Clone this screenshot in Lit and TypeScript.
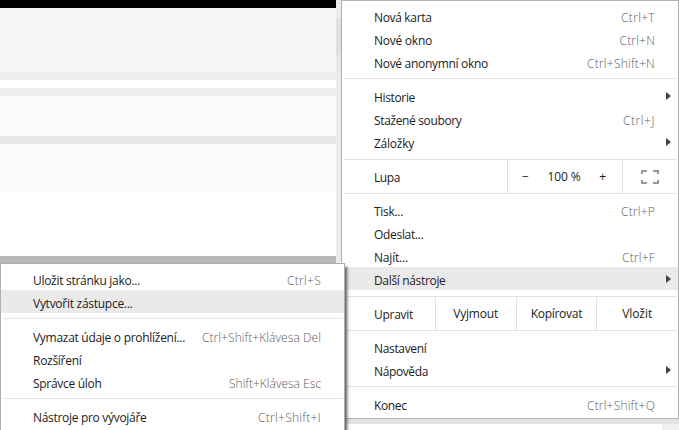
import { LitElement, html, css, svg, nothing } from "lit";
import { customElement, property } from "lit/decorators.js";

interface Item {
  label: string;
  width: number;
  keys?: string;
  keysWidth?: number;
  submenu?: boolean;
  active?: boolean;
}

/** Text run whose tracking is adjusted so that it fills a given advance width. */
@customElement("fit-text")
class FitText extends LitElement {
  @property() text = "";
  @property({ type: Number }) width = 0;

  static styles = css`
    :host {
      display: inline-block;
      white-space: pre;
    }
  `;

  updated() {
    this.style.letterSpacing = "0px";
    const natural = this.getBoundingClientRect().width;
    this.style.letterSpacing = `${(this.width - natural) / this.text.length}px`;
  }

  render() {
    return html`${this.text}`;
  }
}

@customElement("menu-row")
class MenuRow extends LitElement {
  @property({ attribute: false }) item!: Item;

  static styles = css`
    :host {
      display: block;
    }
    .row {
      display: flex;
      box-sizing: border-box;
      align-items: center;
      justify-content: space-between;
      height: 23px;
      padding: 4px 23px 0 32px;
      position: relative;
    }
    .active {
      background: #eaeaea;
    }
    .keys {
      color: #5c5c5c;
      font-weight: 300;
    }
    .arrow {
      position: absolute;
      right: 7px;
      top: 8px;
      width: 5px;
      height: 8px;
      fill: #444;
    }
  `;

  render() {
    const i = this.item;
    return html`<div class="row ${i.active ? "active" : ""}">
      <fit-text .text=${i.label} .width=${i.width}></fit-text>
      ${i.keys
        ? html`<fit-text class="keys" .text=${i.keys} .width=${i.keysWidth ?? 0}></fit-text>`
        : nothing}
      ${i.submenu
        ? html`<svg class="arrow" viewBox="0 0 5 8">${svg`<path d="M0 0L5 4L0 8z" />`}</svg>`
        : nothing}
    </div>`;
  }
}

const rows = (items: Item[]) => items.map((i) => html`<menu-row .item=${i}></menu-row>`);

const tabs: Item[] = [
  { label: "Nová karta", width: 57.5, keys: "Ctrl+T", keysWidth: 34 },
  { label: "Nové okno", width: 58, keys: "Ctrl+N", keysWidth: 35.5 },
  { label: "Nové anonymní okno", width: 114, keys: "Ctrl+Shift+N", keysWidth: 68 },
];
const library: Item[] = [
  { label: "Historie", width: 41, submenu: true },
  { label: "Stažené soubory", width: 87.5, keys: "Ctrl+J", keysWidth: 32 },
  { label: "Záložky", width: 40, submenu: true },
];
const page: Item[] = [
  { label: "Tisk...", width: 29, keys: "Ctrl+P", keysWidth: 34 },
  { label: "Odeslat...", width: 49.5 },
  { label: "Najít...", width: 34, keys: "Ctrl+F", keysWidth: 33 },
  { label: "Další nástroje", width: 71.5, submenu: true, active: true },
];
const settings: Item[] = [
  { label: "Nastavení", width: 52.5 },
  { label: "Nápověda", width: 54, submenu: true },
];
const quit: Item[] = [{ label: "Konec", width: 32.5, keys: "Ctrl+Shift+Q", keysWidth: 68 }];

const save: Item[] = [
  { label: "Uložit stránku jako...", width: 107, keys: "Ctrl+S", keysWidth: 34 },
  { label: "Vytvořit zástupce...", width: 99.5, active: true },
];
const manage: Item[] = [
  { label: "Vymazat údaje o prohlížení...", width: 152, keys: "Ctrl+Shift+Klávesa Del", keysWidth: 119 },
  { label: "Rozšíření", width: 48.5 },
  { label: "Správce úloh", width: 68.5, keys: "Shift+Klávesa Esc", keysWidth: 92 },
];
const developer: Item[] = [
  { label: "Nástroje pro vývojáře", width: 113.5, keys: "Ctrl+Shift+I", keysWidth: 63 },
];

@customElement("app-root")
class AppRoot extends LitElement {
  static styles = css`
    :host {
      display: block;
      position: relative;
      width: 679px;
      height: 430px;
      overflow: hidden;
      background: #fff;
      color: #1c1c1c;
      font: 12px/17px "Open Sans", "Noto Sans", sans-serif;
    }
    .backdrop {
      display: grid;
      grid-template-columns: 336px 343px;
      height: 430px;
    }
    .page {
      display: grid;
      grid-template-rows: 8px 64px 8px 8px 8px 40px 8px 48px 64px 8px;
    }
    .black { background: #000; }
    .light { background: #f5f5f5; }
    .band { background: #ededed; }
    .pale { background: #fafafa; }
    .mid { background: #e6e6e6; }
    .dark { background: #b8b8b8; }
    .edge {
      display: grid;
      grid-template-rows: 72px 347px 5px 6px;
      background: #ededed;
    }
    .edge-top {
      background: linear-gradient(#ebebeb 17px, #dfdfdf 20px, #dfdfdf 53px, #e8e8e8 56px);
    }
    .edge-line { background: #e2e2e2; }
    .edge-foot {
      background: #fff;
      border-right: 17px solid #f1f1f1;
    }
    .menu {
      position: absolute;
      box-sizing: border-box;
      background: #fff;
      border: 1px solid #b0b0b0;
    }
    .main {
      left: 341px;
      top: 0;
      width: 338px;
      height: 419px;
      padding-top: 3px;
    }
    .sub {
      left: 0;
      top: 263px;
      width: 345px;
      height: 180px;
      padding-top: 3px;
      box-shadow: 3px 3px 3px -1px #555;
    }
    .sep {
      height: 1px;
      margin: 5px 1px 5px 2px;
      background: #e3e3e3;
    }
    .strip {
      display: flex;
      box-sizing: border-box;
      height: 35px;
      margin: 6px 1px 4px 2px;
      border: solid #e3e3e3;
      border-width: 1px 0;
      line-height: 35px;
    }
    .name {
      box-sizing: border-box;
      padding-left: 30px;
    }
    .zoom .name { width: 163px; }
    .edit .name { width: 91px; }
    .cell {
      box-sizing: border-box;
      border-left: 1px solid #e3e3e3;
      text-align: center;
    }
    .level {
      display: flex;
      justify-content: space-between;
      width: 115px;
      padding: 0 16px 0 14px;
      line-height: 34px;
    }
    .full {
      display: flex;
      flex: 1;
      align-items: center;
      padding-left: 18px;
    }
    .full svg {
      width: 18px;
      height: 14px;
      fill: none;
      stroke: #999;
      stroke-width: 2;
    }
    .edit .cell {
      width: 81px;
      line-height: 34px;
    }
  `;

  render() {
    return html`
      <div class="backdrop">
        <div class="page">
          <div class="black"></div>
          <div class="light"></div>
          <div class="band"></div>
          <div></div>
          <div class="band"></div>
          <div class="pale"></div>
          <div class="mid"></div>
          <div class="pale"></div>
          <div></div>
          <div class="dark"></div>
        </div>
        <div class="edge">
          <div class="edge-top"></div>
          <div></div>
          <div class="edge-line"></div>
          <div class="edge-foot"></div>
        </div>
      </div>

      <div class="menu main">
        ${rows(tabs)}
        <div class="sep"></div>
        ${rows(library)}
        <div class="strip zoom">
          <div class="name"><fit-text .text=${"Lupa"} .width=${26}></fit-text></div>
          <div class="cell level">
            <span>−</span>
            <fit-text .text=${"100 %"} .width=${33}></fit-text>
            <span>+</span>
          </div>
          <div class="cell full">
            <svg viewBox="0 0 18 14">
              <path d="M1 4V1H6M12 1H17V4M17 10V13H12M6 13H1V10" />
            </svg>
          </div>
        </div>
        ${rows(page)}
        <div class="strip edit">
          <div class="name"><fit-text .text=${"Upravit"} .width=${39}></fit-text></div>
          <div class="cell"><fit-text .text=${"Vyjmout"} .width=${45}></fit-text></div>
          <div class="cell"><fit-text .text=${"Kopírovat"} .width=${51.5}></fit-text></div>
          <div class="cell"><fit-text .text=${"Vložit"} .width=${30}></fit-text></div>
        </div>
        ${rows(settings)}
        <div class="sep"></div>
        ${rows(quit)}
      </div>

      <div class="menu sub">
        ${rows(save)}
        <div class="sep"></div>
        ${rows(manage)}
        <div class="sep"></div>
        ${rows(developer)}
      </div>
    `;
  }
}
